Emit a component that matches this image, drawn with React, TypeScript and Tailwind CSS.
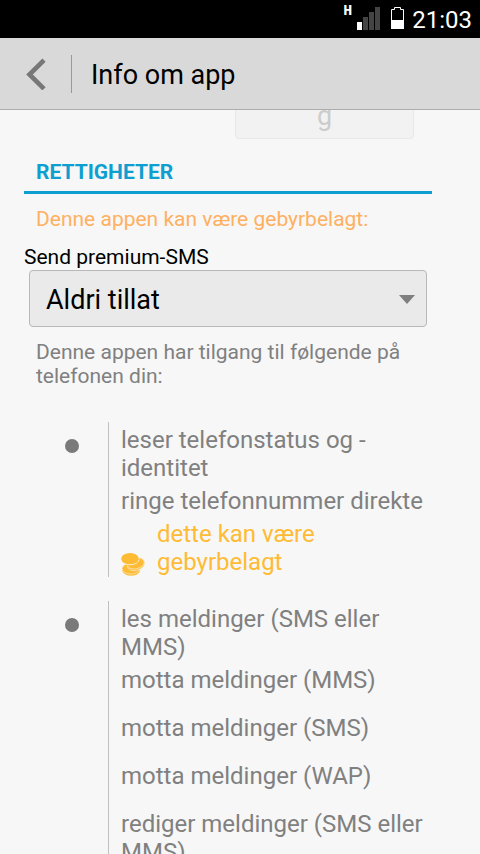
import React, { useState } from "react";
import clsx from "clsx";

type Permission = {
  text: string;
  cost?: string; // Warning shown below the permission when it may cost money
};

const permissionGroups: Permission[][] = [
  [
    { text: "leser telefonstatus og -identitet" },
    { text: "ringe telefonnummer direkte", cost: "dette kan være gebyrbelagt" },
  ],
  [
    { text: "les meldinger (SMS eller MMS)" },
    { text: "motta meldinger (MMS)" },
    { text: "motta meldinger (SMS)" },
    { text: "motta meldinger (WAP)" },
    { text: "rediger meldinger (SMS eller MMS)" },
  ],
];

const CoinsIcon = () => (
  <svg
    className="h-6 w-6 shrink-0"
    viewBox="0 0 24 24"
    fill="#ffbb33"
    stroke="#f9e3b4"
    strokeWidth="0.8"
    aria-hidden="true"
  >
    <path d="M1.2 16v2.6c1 3.6 5 5.2 9 5.2s8-1.6 8.8-5.2V16z" stroke="none" />
    <ellipse cx="10" cy="16.6" rx="8.8" ry="5.4" />
    <ellipse cx="14.8" cy="13" rx="8.6" ry="5.4" transform="rotate(-14 14.8 13)" />
    <ellipse cx="14.8" cy="11.4" rx="8.6" ry="5.4" transform="rotate(-14 14.8 11.4)" />
    <ellipse cx="9" cy="7.2" rx="9" ry="5.6" stroke="#f7f7f7" />
    <ellipse cx="9" cy="6.4" rx="8.6" ry="5.4" stroke="none" />
  </svg>
);

const StatusBar = () => (
  <div className="flex h-[38px] shrink-0 items-center justify-end bg-black pr-2 text-white">
    <span className="self-start pt-1 font-['Liberation_Mono',monospace] text-[15px] leading-4 font-bold">
      H
    </span>
    <svg className="ml-1 h-6 w-6" viewBox="0 0 24 24" aria-hidden="true">
      <path d="M1 15h5v8H1z" fill="#fff" />
      <path d="M7 10h5v13H7zM13 5h5v18h-5zM19 0h5v23h-5z" fill="#444" />
    </svg>
    <svg className="ml-2.5 h-6 w-4" viewBox="0 0 16 24" aria-hidden="true">
      <path d="M1.5 2.5h3v-2h6v2h3v19h-12z" fill="none" stroke="#fff" />
      <path d="M1 13h13v9H1z" fill="#fff" />
    </svg>
    <span className="ml-1.5 pt-px text-[24px] leading-7">21:03</span>
  </div>
);

const App = () => {
  const [premiumSms, setPremiumSms] = useState("never");

  return (
    <div className="flex h-screen flex-col overflow-hidden bg-[#f7f7f7] font-['Roboto',sans-serif]">
      <StatusBar />

      <header className="flex h-[72px] shrink-0 items-center border-b border-[#adadad] bg-[#d9d9d9]">
        <button
          type="button"
          aria-label="Tilbake"
          className="flex h-full w-[71px] items-center justify-center"
        >
          <svg className="h-8 w-5" viewBox="0 0 20 32" aria-hidden="true">
            <path
              d="M18 2.2 3.5 16.5 18 30.8"
              fill="none"
              stroke="#777"
              strokeWidth="4.6"
            />
          </svg>
        </button>
        <div className="h-[38px] w-px bg-[#999]" />
        <h1 className="ml-[19px] pt-0.5 text-[27px] leading-8 text-black">
          Info om app
        </h1>
      </header>

      <main className="min-h-0 flex-1 overflow-hidden pr-12 pl-6">
        {/* Disabled button, mostly scrolled under the header */}
        <div className="-mt-7 flex justify-end pr-[18px]">
          <button
            type="button"
            disabled
            className="h-[57px] w-[179px] rounded-[4px] border border-[#e8e8e8] bg-[#f2f2f2] pt-2.5 text-[27px] leading-8 text-[#ccc]"
          >
            g
          </button>
        </div>

        <h2 className="mt-[21px] border-b-3 border-[#0e9fd0] px-3 pb-[7px] text-[21px] leading-6 font-bold text-[#0e9fd0]">
          RETTIGHETER
        </h2>

        <p className="mt-[13px] px-3 text-[21px] leading-6 text-[#ffb061]">
          Denne appen kan være gebyrbelagt:
        </p>

        <label
          htmlFor="premium-sms"
          className="mt-3.5 block text-[21px] leading-6 text-black"
        >
          Send premium-SMS
        </label>
        <div className="relative mx-[5px] mt-px">
          <select
            id="premium-sms"
            value={premiumSms}
            onChange={(e) => setPremiumSms(e.target.value)}
            className="h-[57px] w-full appearance-none rounded-[4px] border border-[#b9b9b9] bg-[#eaeaea] px-4 pt-0.5 text-[27px] leading-8 text-black"
          >
            <option value="ask">Spør</option>
            <option value="never">Aldri tillat</option>
            <option value="always">Tillat alltid</option>
          </select>
          <svg
            className="pointer-events-none absolute top-6 right-3 h-2.5 w-4"
            viewBox="0 0 16 10"
            aria-hidden="true"
          >
            <path d="M0 1h16L8 10z" fill="#7f7f7f" />
          </svg>
        </div>

        <p className="mt-[13px] px-3 text-[21px] leading-6 text-[#808080]">
          Denne appen har tilgang til følgende på telefonen din:
        </p>

        <div className="mt-[34px] flex flex-col gap-6">
          {permissionGroups.map((group, i) => (
            <section key={i} className="flex">
              <div className="flex w-[84px] shrink-0 justify-center pt-[17px]">
                <span className="ml-3 h-3.5 w-3.5 rounded-full bg-[#7a7a7a]" />
              </div>
              <ul className="flex flex-1 flex-col border-l border-[#c0c0c0] pl-3 text-[24px] leading-7 text-[#808080]">
                {group.map((permission) => (
                  <li
                    key={permission.text}
                    className={clsx(
                      "pt-1 pb-px",
                      !permission.cost && "min-h-12"
                    )}
                  >
                    {permission.text}
                    {permission.cost && (
                      <div className="mt-[5px] flex items-end gap-3 text-[#ffbb33]">
                        <CoinsIcon />
                        <span>{permission.cost}</span>
                      </div>
                    )}
                  </li>
                ))}
              </ul>
            </section>
          ))}
        </div>
      </main>
    </div>
  );
};

export default App;
